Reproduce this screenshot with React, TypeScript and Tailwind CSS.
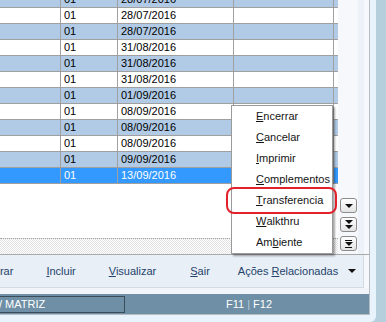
import React from "react";

const dates = [
  "28/07/2016",
  "28/07/2016",
  "28/07/2016",
  "31/08/2016",
  "31/08/2016",
  "31/08/2016",
  "01/09/2016",
  "08/09/2016",
  "08/09/2016",
  "08/09/2016",
  "09/09/2016",
  "13/09/2016",
];

const menu = [
  { pre: "", key: "E", post: "ncerrar" },
  { pre: "", key: "C", post: "ancelar" },
  { pre: "", key: "I", post: "mprimir" },
  { pre: "", key: "C", post: "omplementos" },
  { pre: "", key: "T", post: "ransferencia" },
  { pre: "", key: "W", post: "alkthru" },
  { pre: "Am", key: "b", post: "iente" },
];

function Tri({ className = "" }: { className?: string }) {
  return (
    <svg width="8" height="4" viewBox="0 0 8 4" className={className}>
      <path d="M0 0 H8 L4 4 Z" fill="#111" />
    </svg>
  );
}

function SmallButton({ kind }: { kind: 1 | 2 | 3 }) {
  return (
    <div className="flex h-[15px] w-[17px] flex-col items-center justify-center gap-[1px] rounded-[3px] border border-[#8c8c8c] bg-gradient-to-b from-white to-[#e4e4e4]">
      {kind === 3 && <div className="h-[1px] w-[7px] bg-[#111]" />}
      <Tri />
      {kind === 2 && <Tri />}
      {kind === 3 && <div className="h-[1px] w-[7px] bg-[#111]" />}
    </div>
  );
}

export default function App() {
  return (
    <div className="relative flex h-[322px] w-[386px] overflow-hidden bg-[#b5cfdc] font-['Liberation_Sans',Arial,sans-serif] text-[11px]">
      <div className="h-[322px] w-[376px] rounded-br-[6px] bg-[#e9f3fb] pb-[7px] pr-[6px]">
        <div className="flex h-full flex-col border-b border-r border-[#b7bcc2] bg-[#f7f8fb]">
          {/* grid + side strip */}
          <div className="flex h-[255px] border-b border-[#a9a9a9]">
            <div className="flex w-[338px] flex-col overflow-hidden bg-white">
              <div className="mt-[-8px] flex flex-col">
                {dates.map((d, i) => {
                  const sel = i === dates.length - 1;
                  const bg = sel ? "bg-[#3399ff] text-white" : i % 2 === 0 ? "bg-[#b1cbe6] text-black" : "bg-white text-black";
                  return (
                    <div key={i} className={`flex h-[16px] border-b border-[#a0a0a0] leading-[15px] ${bg}`}>
                      <div className="w-[61px] border-r border-[#a0a0a0]" />
                      <div className="w-[57px] border-r border-[#a0a0a0] pl-[3px]">01</div>
                      <div className="w-[116px] border-r border-[#a0a0a0] pl-[3px]">{d}</div>
                      <div className="w-[100px] border-r border-[#a0a0a0]" />
                      <div className="flex-1" />
                    </div>
                  );
                })}
              </div>
              <div className="flex-1" />
              <div className="h-[16px] border-t border-dotted border-[#a8a8a8] bg-[repeating-conic-gradient(#e2e2e2_0%_25%,#ffffff_0%_50%)] bg-[length:2px_2px]" />
            </div>
            <div className="flex w-[20px] flex-col gap-[4px] bg-[#f7f8fb] pl-[2px] pt-[198px]">
              <SmallButton kind={1} />
              <SmallButton kind={2} />
              <SmallButton kind={3} />
            </div>
            <div className="w-[6px] bg-[#edf1f8]" />
            <div className="w-[5px] bg-[#f5f9fd]" />
          </div>

          {/* button bar */}
          <div className="flex h-[33px] w-[364px] items-center overflow-hidden whitespace-nowrap border-b border-r border-[#d3dbe4] bg-[#e9eff6] text-[#24436b]">
            <span className="ml-[-19px]">Alterar</span>
            <span className="ml-[33px]">
              <span className="underline">I</span>ncluir
            </span>
            <span className="ml-[33px]">
              <span className="underline">V</span>isualizar
            </span>
            <span className="ml-[34px]">
              <span className="underline">S</span>air
            </span>
            <span className="ml-[28px]">
              Ações <span className="underline">R</span>elacionadas
            </span>
            <Tri className="ml-[10px]" />
          </div>
          <div className="h-[6px] bg-[#f1f5fa]" />

          {/* status bar */}
          <div className="flex h-[20px] items-center overflow-hidden whitespace-nowrap bg-[#6e8fa5] text-white">
            <div className="ml-[-1px] flex h-[17px] w-[126px] items-center border border-[#3a4c58] pl-[2px]">
              <span className="ml-[-3px]">/ MATRIZ</span>
            </div>
            <span className="ml-[101px]">
              F11 <span className="text-[#b9cad6]">|</span> F12
            </span>
          </div>
        </div>
      </div>

      {/* popup menu */}
      <div className="absolute left-[231px] top-[105px] w-[102px] border border-[#9a9a9a] bg-white text-[#151515] shadow-[2px_2px_2px_rgba(0,0,0,0.35)]">
        {menu.map((m, i) => (
          <div key={i} className="flex h-[21px] items-center whitespace-nowrap pl-[24px]">
            {m.pre}
            <span className="underline">{m.key}</span>
            {m.post}
          </div>
        ))}
      </div>
      <div className="absolute left-[226px] top-[187px] h-[27px] w-[111px] rounded-[8px] border-2 border-[#e3212b]" />
    </div>
  );
}
